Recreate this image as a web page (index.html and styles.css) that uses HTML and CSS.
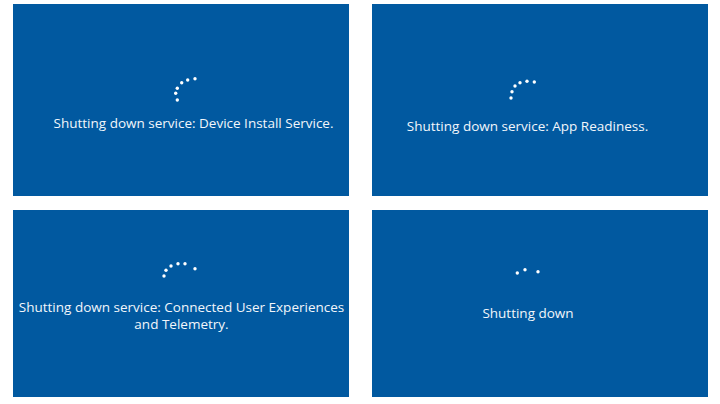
FILE: index.html
```html
<!DOCTYPE html>
<html>
<head>
<meta charset="utf-8">
<link rel="stylesheet" href="styles.css">
</head>
<body>
<div class="grid">
  <section class="panel p1">
    <svg class="spin" width="336" height="28" viewBox="0 0 336 28">
      <circle cx="182" cy="3.7" r="1.7"/><circle cx="174.7" cy="5" r="1.7"/><circle cx="168.7" cy="7.7" r="1.7"/>
      <circle cx="164.3" cy="13.3" r="1.7"/><circle cx="162.7" cy="18.3" r="1.7"/><circle cx="164.3" cy="25" r="1.7"/>
    </svg>
    <p class="msg">Shutting down service: Device Install Service.</p>
  </section>
  <section class="panel p2">
    <svg class="spin" width="336" height="22" viewBox="0 0 336 22">
      <circle cx="162.3" cy="3" r="1.7"/><circle cx="155" cy="2.2" r="1.7"/><circle cx="148" cy="3.7" r="1.7"/>
      <circle cx="143" cy="7" r="1.7"/><circle cx="140" cy="12.7" r="1.7"/><circle cx="139" cy="19" r="1.7"/>
    </svg>
    <p class="msg">Shutting down service: App Readiness.</p>
  </section>
  <section class="panel p3">
    <svg class="spin" width="336" height="20" viewBox="0 0 336 20">
      <circle cx="182" cy="8.7" r="1.7"/><circle cx="172" cy="3.7" r="1.7"/><circle cx="165" cy="3.7" r="1.7"/>
      <circle cx="158" cy="6" r="1.7"/><circle cx="153" cy="10.3" r="1.7"/><circle cx="151" cy="16" r="1.7"/>
    </svg>
    <p class="msg">Shutting down service: Connected User Experiences<br>and Telemetry.</p>
  </section>
  <section class="panel p4">
    <svg class="spin" width="336" height="10" viewBox="0 0 336 10">
      <circle cx="145.3" cy="7" r="1.7"/><circle cx="153" cy="3.7" r="1.7"/><circle cx="166" cy="5.7" r="1.7"/>
    </svg>
    <p class="msg">Shutting down</p>
  </section>
</div>
</body>
</html>
```
FILE: styles.css
```css
html, body {
  margin: 0;
  background: #ffffff;
}
body {
  width: 720px;
  height: 404px;
  overflow: hidden;
  font-family: "Open Sans", "Noto Sans", "Liberation Sans", sans-serif;
}
.grid {
  display: grid;
  grid-template-columns: 336px 336px;
  grid-template-rows: 192px 187px;
  column-gap: 23px;
  row-gap: 14px;
  padding: 4px 0 0 13px;
}
.panel {
  background: #0159a0;
  display: flex;
  flex-direction: column;
  color: #f2f6fb;
}
.spin {
  display: block;
  fill: #ffffff;
}
.msg {
  margin: 0;
  font-size: 13.5px;
  line-height: 16px;
  text-align: center;
  white-space: nowrap;
}
.p1 { padding-top: 71px; }
.p1 .msg { margin-top: 12px; padding-left: 25px; }
.p2 { padding-top: 75px; }
.p2 .msg { margin-top: 17px; padding-right: 25px; }
.p3 { padding-top: 50px; }
.p3 .msg { margin-top: 19px; line-height: 17px; padding-left: 1px; }
.p4 { padding-top: 56px; }
.p4 .msg { margin-top: 29px; padding-right: 24px; }
```
